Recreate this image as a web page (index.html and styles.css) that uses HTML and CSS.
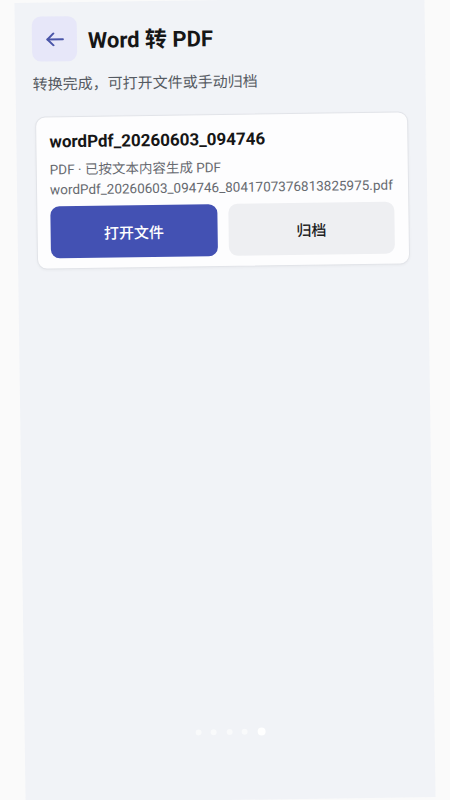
FILE: index.html
```html
<!DOCTYPE html>
<html lang="zh-CN">
<head>
    <meta charset="UTF-8">
    <meta name="viewport" content="width=device-width, initial-scale=1.0">
    <title>Word 转 PDF</title>
    <link rel="stylesheet" href="styles.css">
</head>
<body>
    <div class="screen">
        <!-- Шапка -->
        <div class="header">
            <button class="back-button" aria-label="返回">
                <svg width="18" height="14" viewBox="0 0 18 14" fill="none" stroke="#4a55a8" stroke-width="2" stroke-linecap="round" stroke-linejoin="round">
                    <path d="M17 7H1.5"/>
                    <path d="M7.5 1L1.5 7L7.5 13"/>
                </svg>
            </button>
            <h1 class="title">Word 转 PDF</h1>
        </div>

        <p class="subtitle">转换完成，可打开文件或手动归档</p>

        <!-- Карточка результата -->
        <div class="result-card">
            <div class="result-name">wordPdf_20260603_094746</div>
            <p class="result-meta">PDF · 已按文本内容生成 PDF<br>wordPdf_20260603_094746_8041707376813825975.pdf</p>
            <div class="result-actions">
                <button class="btn btn-primary">打开文件</button>
                <button class="btn btn-secondary">归档</button>
            </div>
        </div>

        <!-- Индикатор страниц -->
        <div class="page-dots">
            <span class="dot"></span>
            <span class="dot"></span>
            <span class="dot"></span>
            <span class="dot"></span>
            <span class="dot active"></span>
        </div>
    </div>
</body>
</html>
```

FILE: styles.css
```css
html, body {
    margin: 0;
    height: 800px;
    overflow: hidden;
    background-color: #fafafa;
    font-family: Roboto, "Noto Sans CJK SC", sans-serif;
}

.screen {
    box-sizing: border-box;
    width: 410px;
    height: 800px;
    margin-left: 19.5px;
    padding: 14px 18px 0 19px;
    background-color: #f1f3f7;
    transform: rotate(-0.8deg);
    display: flex;
    flex-direction: column;
}

.header {
    display: flex;
    align-items: center;
    gap: 11px;
    margin-left: -2px;
}

.back-button {
    width: 45px;
    height: 45px;
    border: none;
    border-radius: 9px;
    background-color: #e7e7f9;
    display: flex;
    align-items: center;
    justify-content: center;
    padding: 0;
    cursor: pointer;
}

.title {
    margin: 0;
    font-size: 22px;
    font-weight: 700;
    color: #161616;
    line-height: 30px;
    padding-top: 4px;
}

.subtitle {
    margin: 13px 0 0 -2px;
    font-size: 15px;
    line-height: 20px;
    color: #555a62;
}

.result-card {
    margin-top: 22px;
    background-color: #fdfdfe;
    border: 1px solid #e2e4e9;
    border-radius: 10px;
    padding: 13px 14px 10px 13px;
    box-shadow: 0 1px 3px rgba(0, 0, 0, 0.04);
}

.result-name {
    font-size: 17px;
    font-weight: 700;
    color: #161616;
    line-height: 22px;
}

.result-meta {
    margin: 7px 0 0;
    font-size: 13.5px;
    line-height: 20px;
    color: #676a70;
}

.result-actions {
    display: flex;
    gap: 11px;
    margin-top: 7px;
}

.btn {
    flex: 1;
    height: 52px;
    border: none;
    border-radius: 9px;
    font-family: Roboto, "Noto Sans CJK SC", sans-serif;
    font-size: 15px;
    font-weight: 500;
    cursor: pointer;
}

.btn-primary {
    background-color: #4351b3;
    color: #ffffff;
}

.btn-secondary {
    background-color: #eeeff2;
    color: #1d1d1f;
}

.page-dots {
    margin-top: auto;
    padding-bottom: 64px;
    display: flex;
    justify-content: center;
    align-items: center;
    gap: 9.5px;
}

.dot {
    width: 6px;
    height: 6px;
    border-radius: 50%;
    background-color: rgba(255, 255, 255, 0.55);
}

.dot.active {
    width: 8px;
    height: 8px;
    background-color: rgba(255, 255, 255, 0.95);
}
```
